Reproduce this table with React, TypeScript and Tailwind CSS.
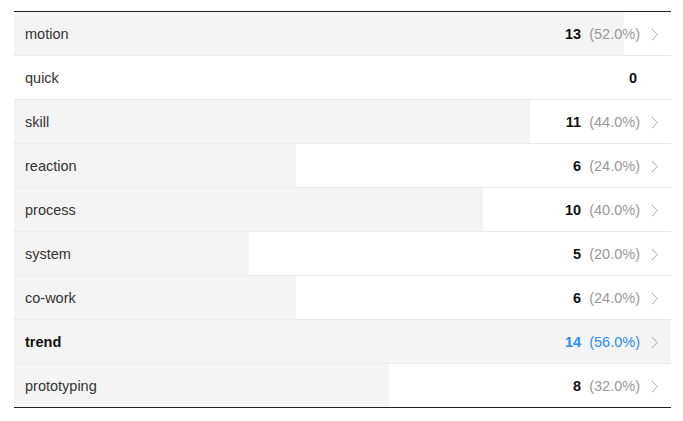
import React from "react";

type Row = { label: string; count: number; highlight?: boolean };

const rows: Row[] = [
  { label: "motion", count: 13 },
  { label: "quick", count: 0 },
  { label: "skill", count: 11 },
  { label: "reaction", count: 6 },
  { label: "process", count: 10 },
  { label: "system", count: 5 },
  { label: "co-work", count: 6 },
  { label: "trend", count: 14, highlight: true },
  { label: "prototyping", count: 8 },
];

const total = 25;
const max = 14;

const Chevron: React.FC = () => (
  <svg width="7" height="13" viewBox="0 0 7 13" className="ml-[11px] shrink-0">
    <path d="M0.8 0.8 L6.2 6.5 L0.8 12.2" fill="none" stroke="#a8a8a8" strokeWidth="1" />
  </svg>
);

export default function App() {
  return (
    <div
      className="w-[683px] h-[421px] bg-white pt-[11px] px-[14px]"
      style={{ fontFamily: '"Liberation Sans", Arial, sans-serif' }}
    >
      {/* Table */}
      <div className="border-t border-[#222] w-[657px]">
        {rows.map((r, i) => {
          const pct = ((r.count / total) * 100).toFixed(1);
          const last = i === rows.length - 1;
          return (
            <div
              key={r.label}
              className={`relative h-[44px] flex items-center border-b ${last ? "border-[#222]" : "border-[#ebebeb]"}`}
            >
              <div
                className="absolute left-0 top-0 bottom-0 bg-[#f4f4f4]"
                style={{ width: `${(r.count / max) * 100}%` }}
              />
              <div className="relative flex items-center w-full text-[14.5px] pt-[2px]">
                <span
                  className={`pl-[11px] flex-1 ${r.highlight ? "font-bold text-[#111]" : "text-[#333]"}`}
                >
                  {r.label}
                </span>
                {r.count === 0 ? (
                  <span className="font-bold text-[#111] pr-[34px]">0</span>
                ) : (
                  <div className="flex items-center pr-[13px]">
                    <span className={`font-bold ${r.highlight ? "text-[#2a8cf0]" : "text-[#111]"}`}>
                      {r.count}
                    </span>
                    <span className={`ml-[8px] ${r.highlight ? "text-[#2a8cf0]" : "text-[#999]"}`}>
                      ({pct}%)
                    </span>
                    <Chevron />
                  </div>
                )}
              </div>
            </div>
          );
        })}
      </div>
    </div>
  );
}
